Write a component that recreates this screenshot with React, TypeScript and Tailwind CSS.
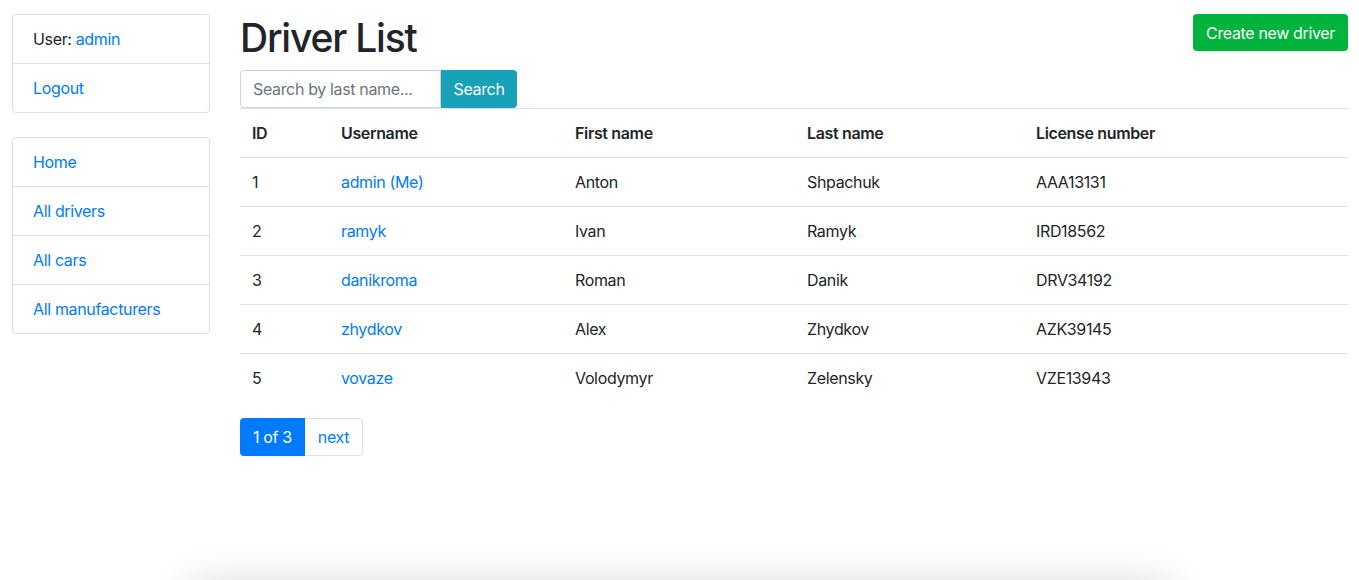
import React from "react";

const drivers = [
  { id: 1, username: "admin (Me)", first: "Anton", last: "Shpachuk", license: "AAA13131" },
  { id: 2, username: "ramyk", first: "Ivan", last: "Ramyk", license: "IRD18562" },
  { id: 3, username: "danikroma", first: "Roman", last: "Danik", license: "DRV34192" },
  { id: 4, username: "zhydkov", first: "Alex", last: "Zhydkov", license: "AZK39145" },
  { id: 5, username: "vovaze", first: "Volodymyr", last: "Zelensky", license: "VZE13943" },
];

const navLinks = ["Home", "All drivers", "All cars", "All manufacturers"];

export default function App() {
  return (
    <div
      className="min-h-screen bg-white text-[16px] tracking-[-0.35px] text-[#212529]"
      style={{ fontFamily: "Inter, 'Liberation Sans', sans-serif" }}
    >
      <div className="flex gap-[30px] pl-[12px] pr-[11px] pt-[14px]">
        {/* Sidebar */}
        <aside className="w-[198px] shrink-0">
          <ul className="rounded border border-[#dfdfdf]">
            <li className="h-[49px] px-[20px] flex items-center border-b border-[#dfdfdf]">
              User:&nbsp;<a className="text-[#007bff]">admin</a>
            </li>
            <li className="h-[48px] px-[20px] flex items-center">
              <a className="text-[#007bff]">Logout</a>
            </li>
          </ul>
          <ul className="mt-[24px] rounded border border-[#dfdfdf]">
            {navLinks.map((l, i) => (
              <li
                key={l}
                className={`px-[20px] flex items-center ${
                  i < navLinks.length - 1 ? "h-[49px] border-b border-[#dfdfdf]" : "h-[48px]"
                }`}
              >
                <a className="text-[#007bff]">{l}</a>
              </li>
            ))}
          </ul>
        </aside>

        {/* Main */}
        <main className="flex-1">
          <div className="flex items-start justify-between">
            <h1 className="text-[39px] font-medium leading-[48px] tracking-[-1.2px] mb-[8px]">Driver List</h1>
            <button className="h-[37px] px-[13px] rounded bg-[#00b33c] text-white text-[16px]">
              Create new driver
            </button>
          </div>
          <form className="flex h-[38px]">
            <input
              className="w-[201px] h-[38px] px-[12px] border border-[#ced4da] rounded-l text-[16px] placeholder:text-[#6c757d] outline-none"
              placeholder="Search by last name..."
            />
            <button type="button" className="w-[76px] h-[38px] rounded-r bg-[#17a2b8] text-white text-[16px]">
              Search
            </button>
          </form>
          <table className="w-full text-left">
            <thead>
              <tr className="border-t border-[#dee2e6]">
                <th className="w-[89px] h-[49px] px-[12px] font-semibold">ID</th>
                <th className="w-[234px] px-[12px] font-semibold">Username</th>
                <th className="w-[232px] px-[12px] font-semibold">First name</th>
                <th className="w-[229px] px-[12px] font-semibold">Last name</th>
                <th className="px-[12px] font-semibold">License number</th>
              </tr>
            </thead>
            <tbody>
              {drivers.map((d) => (
                <tr key={d.id} className="border-t border-[#dee2e6]">
                  <td className="h-[49px] px-[12px]">{d.id}</td>
                  <td className="px-[12px]">
                    <a className="text-[#007bff]">{d.username}</a>
                  </td>
                  <td className="px-[12px]">{d.first}</td>
                  <td className="px-[12px]">{d.last}</td>
                  <td className="px-[12px]">{d.license}</td>
                </tr>
              ))}
            </tbody>
          </table>
          <nav className="mt-[15px] flex">
            <span className="h-[38px] px-[13px] flex items-center rounded-l bg-[#007bff] text-white">1 of 3</span>
            <a className="h-[38px] px-[13px] flex items-center rounded-r border border-l-0 border-[#dee2e6] text-[#007bff]">
              next
            </a>
          </nav>
        </main>
      </div>
      <div className="mt-[130px] mx-auto w-[980px] h-[40px] bg-white shadow-[0_0_40px_rgba(0,0,0,0.18)]" />
    </div>
  );
}
